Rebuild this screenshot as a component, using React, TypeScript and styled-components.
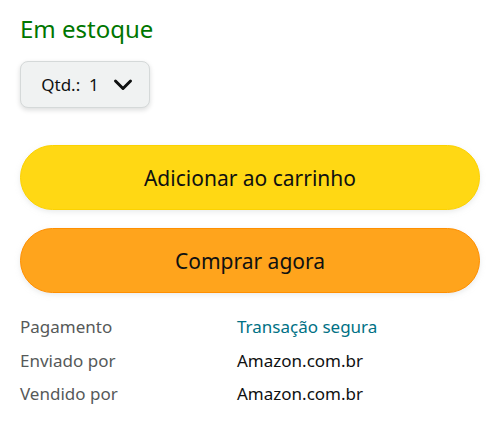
import React from "react";
import styled, { createGlobalStyle } from "styled-components";

const Global = createGlobalStyle`
  html, body { margin: 0; padding: 0; background: #fff; }
  body { font-family: "Noto Sans", Roboto, sans-serif; color: #0f1111; }
`;

const Page = styled.div`
  width: 500px;
  box-sizing: border-box;
  padding: 14px 20px 0 20px;
  display: flex;
  flex-direction: column;
`;

const Stock = styled.div`
  color: #007600;
  font-size: 24px;
  line-height: 30px;
`;

const QtySelect = styled.button`
  margin-top: 17px;
  width: 130px;
  height: 47px;
  box-sizing: border-box;
  display: flex;
  align-items: center;
  justify-content: center;
  gap: 14px;
  background: #f0f2f2;
  border: 1px solid #d5d9d9;
  border-radius: 8px;
  box-shadow: 0 2px 5px rgba(15, 17, 17, 0.15);
  font-family: inherit;
  font-size: 17px;
  color: #0f1111;
  padding: 0 0 0 4px;
`;

const Buttons = styled.div`
  margin-top: 37px;
  display: flex;
  flex-direction: column;
  gap: 18px;
`;

const Pill = styled.button<{ $bg: string; $border: string }>`
  width: 460px;
  height: 65px;
  box-sizing: border-box;
  border-radius: 33px;
  background: ${(p) => p.$bg};
  border: 1px solid ${(p) => p.$border};
  box-shadow: 0 2px 5px rgba(213, 217, 217, 0.5);
  font-family: inherit;
  font-size: 21px;
  color: #0f1111;
  padding: 0;
`;

const Info = styled.div`
  margin-top: 21px;
  display: grid;
  grid-template-columns: 217px 1fr;
  row-gap: 7.5px;
  font-size: 17px;
  line-height: 26px;
`;

const Label = styled.div`
  color: #565959;
`;

const Value = styled.div<{ $link?: boolean }>`
  color: ${(p) => (p.$link ? "#007185" : "#0f1111")};
`;

const Chevron = () => (
  <svg width="20" height="14" viewBox="0 0 20 14">
    <path d="M2.5 3 L10 10.5 L17.5 3" fill="none" stroke="#0f1111" strokeWidth="3" strokeLinecap="round" strokeLinejoin="round" />
  </svg>
);

export default function App() {
  return (
    <Page>
      <Global />
      <Stock>Em estoque</Stock>
      <div>
        <QtySelect>
          <span>Qtd.:&nbsp; 1</span>
          <Chevron />
        </QtySelect>
      </div>
      <Buttons>
        <Pill $bg="#ffd814" $border="#fcd200">Adicionar ao carrinho</Pill>
        <Pill $bg="#ffa41c" $border="#ff8f00">Comprar agora</Pill>
      </Buttons>
      <Info>
        <Label>Pagamento</Label>
        <Value $link>Transação segura</Value>
        <Label>Enviado por</Label>
        <Value>Amazon.com.br</Value>
        <Label>Vendido por</Label>
        <Value>Amazon.com.br</Value>
      </Info>
    </Page>
  );
}
